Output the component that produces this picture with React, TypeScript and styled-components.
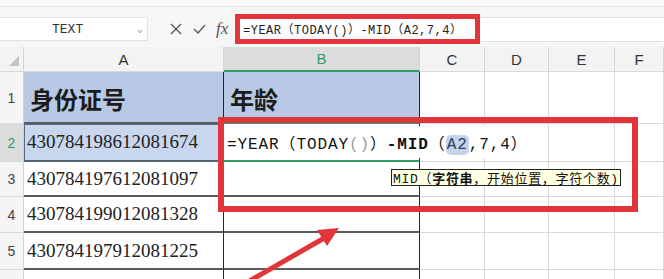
import React from 'react';
import styled, {createGlobalStyle} from 'styled-components';

const GlobalStyle = createGlobalStyle`
  html, body {
    margin: 0;
    padding: 0;
    background: #ffffff;
    overflow: hidden;
  }
  body {
    font-family: "Liberation Sans", "Noto Sans CJK SC", sans-serif;
  }
`

const RED = '#e1353b'
const GREEN = '#2e9d65'
const CJK = '"Noto Sans CJK SC", sans-serif'

const Page = styled.div`
  width: 664px;
  height: 279px;
  overflow: hidden;
  display: flex;
  flex-direction: column;
`

const TopStrip = styled.div`
  flex-shrink: 0;
  height: 6px;
  background: #fbfbfb;
  border-bottom: 1px solid #e4e4e4;
`

const FormulaBar = styled.div`
  flex-shrink: 0;
  height: 40px;
  box-sizing: border-box;
  padding-top: 4px;
  display: flex;
  align-items: center;
  background: #f6f6f6;
`

const NameBox = styled.div`
  width: 148px;
  height: 24px;
  box-sizing: border-box;
  background: #ffffff;
  border: 1px solid #e2e2e2;
  border-left: none;
  display: flex;
  align-items: center;
  justify-content: space-between;
  padding: 0 4px 0 52px;
  font-family: "Liberation Mono", monospace;
  font-size: 13px;
  color: #333;
`

const Caret = styled.span`
  font-size: 10px;
  color: #777;
`

const BarIcons = styled.div`
  width: 87px;
  display: flex;
  align-items: center;
  gap: 9px;
  padding-left: 21px;
  box-sizing: border-box;
  color: #555;
`

const Fx = styled.span`
  font-family: "Liberation Serif", serif;
  font-style: italic;
  font-size: 17px;
  color: #555;
`

const FormulaField = styled.div`
  flex: 1;
  height: 23px;
  background: #ffffff;
  border-top: 1px solid #e0e0e0;
  border-bottom: 1px solid #e0e0e0;
  display: flex;
  align-items: center;
`

const FormulaBox = styled.div`
  width: 245px;
  height: 30px;
  box-sizing: border-box;
  border: 5px solid ${RED};
  display: flex;
  align-items: center;
  padding-left: 3px;
  font-family: "Liberation Mono", ${CJK};
  font-size: 12px;
  letter-spacing: 0.5px;
  color: #222;
  white-space: nowrap;
`

const SheetWrap = styled.div`
  position: relative;
  flex: 1;
  min-height: 0;
  overflow: hidden;
`

const Sheet = styled.div`
  display: grid;
  grid-template-columns: 24px 200px 196px 65px 64px 66px 1fr;
  grid-template-rows: 25px 52px 38px 35px 36px 37px 36px;
`

type CellKind = 'corner' | 'colhead' | 'rowhead' | 'title' | 'picked' | 'editing' | 'table' | 'plain'

const fills: Record<CellKind, string> = {
  corner: '#f3f3f3',
  colhead: '#f3f3f3',
  rowhead: '#f5f5f5',
  title: '#b7c9e5',
  picked: '#c8d6ee',
  editing: '#ffffff',
  table: '#ffffff',
  plain: '#ffffff',
}

const darkRight: CellKind[] = ['title', 'picked', 'editing', 'table']

const Cell = styled.div<{ $kind: CellKind; $active?: boolean }>`
  box-sizing: border-box;
  display: flex;
  align-items: center;
  white-space: nowrap;
  background: ${p => p.$active ? '#dcdcdc' : fills[p.$kind]};
  border-right: 1px solid ${p =>
    darkRight.includes(p.$kind) ? '#262626' : p.$kind === 'plain' ? '#dadada' : '#d4d4d4'};
  border-bottom: ${p =>
    p.$kind === 'title' || p.$kind === 'table' || p.$kind === 'picked'
      ? '2px solid #5c5c5c'
      : p.$kind === 'editing' ? `2px solid ${GREEN}`
      : p.$kind === 'colhead' && p.$active ? `2px solid ${GREEN}`
      : '1px solid #dadada'};
  ${p => p.$kind === 'editing'
    ? `border-top: 2px solid ${GREEN}; margin-top: -2px; position: relative; z-index: 2;`
    : ''}
  ${p => p.$kind === 'picked' ? 'outline: 1px solid #4f6b8f; outline-offset: -1px;' : ''}
`

const ColLetter = styled.span<{ $active?: boolean }>`
  width: 100%;
  text-align: center;
  font-size: 15px;
  color: ${p => p.$active ? GREEN : '#333'};
`

const RowNum = styled.span<{ $active?: boolean }>`
  width: 100%;
  text-align: center;
  font-size: 14px;
  color: ${p => p.$active ? GREEN : '#444'};
`

const CornerMark = styled.span`
  width: 0;
  height: 0;
  margin-left: 9px;
  margin-top: 4px;
  border-left: 10px solid transparent;
  border-bottom: 10px solid #c4c4c4;
`

const Title = styled.span`
  padding-left: 6px;
  padding-top: 2px;
  font-family: ${CJK};
  font-weight: 700;
  font-size: 24px;
  color: #1c1c1c;
`

const IdNumber = styled.span`
  padding-left: 3px;
  font-family: "Liberation Serif", serif;
  font-size: 19px;
  color: #222;
`

const Formula = styled.span`
  padding: 4px 8px 4px 3px;
  background: #ffffff;
  font-family: "Liberation Mono", ${CJK};
  font-size: 16px;
  letter-spacing: 0.9px;
  color: #111;
`

const Muted = styled.span`
  color: #9a9aa8;
`

const Bold = styled.b`
  font-weight: 700;
`

const RefChip = styled.span`
  background: #c5d4ea;
  border-radius: 5px;
  padding: 1px 1px;
  color: #2a3f66;
`

const RedFrame = styled.div`
  position: absolute;
  z-index: 3;
  left: 218px;
  top: 70px;
  width: 420px;
  height: 95px;
  box-sizing: border-box;
  border: 6px solid ${RED};
  pointer-events: none;
`

const Tip = styled.div`
  position: absolute;
  z-index: 4;
  left: 391px;
  top: 122px;
  height: 17px;
  box-sizing: border-box;
  padding: 0 1px;
  background: #ffffe3;
  border: 1px solid #222;
  display: flex;
  align-items: center;
  font-family: "Liberation Mono", ${CJK};
  font-size: 13px;
  letter-spacing: 0.7px;
  color: #111;
  white-space: nowrap;
`

const Arrow = styled.svg`
  position: absolute;
  z-index: 3;
  left: 0;
  top: 0;
  pointer-events: none;
`

const columns = ['A', 'B', 'C', 'D', 'E', 'F']

// row 6 only peeks in at the bottom edge, its number is below the frame
const ids = ['430784198612081674', '430784197612081097', '430784199012081328', '430784197912081225', '']

const Blanks = () => (
  <>
    {[0, 1, 2, 3].map(i => <Cell key={i} $kind="plain"/>)}
  </>
)

export default function App() {
  return (
    <>
      <GlobalStyle/>
      <Page>
        <TopStrip/>
        <FormulaBar>
          <NameBox>
            <span>TEXT</span>
            <Caret>⌄</Caret>
          </NameBox>
          <BarIcons>
            <svg width="14" height="14" viewBox="0 0 14 14">
              <path d="M2 2 L12 12 M12 2 L2 12" stroke="#555" strokeWidth="1.3" fill="none"/>
            </svg>
            <svg width="15" height="14" viewBox="0 0 15 14">
              <path d="M2 7 L6 11 L13 3" stroke="#555" strokeWidth="1.3" fill="none"/>
            </svg>
            <Fx>fx</Fx>
          </BarIcons>
          <FormulaField>
            <FormulaBox>=YEAR（TODAY()）-MID（A2,7,4）</FormulaBox>
          </FormulaField>
        </FormulaBar>

        <SheetWrap>
          <Sheet>
            <Cell $kind="corner"><CornerMark/></Cell>
            {columns.map(c => (
              <Cell key={c} $kind="colhead" $active={c === 'B'}>
                <ColLetter $active={c === 'B'}>{c}</ColLetter>
              </Cell>
            ))}

            <Cell $kind="rowhead"><RowNum>1</RowNum></Cell>
            <Cell $kind="title"><Title>身份证号</Title></Cell>
            <Cell $kind="title"><Title>年龄</Title></Cell>
            <Blanks/>

            <Cell $kind="rowhead" $active><RowNum $active>2</RowNum></Cell>
            <Cell $kind="picked"><IdNumber>{ids[0]}</IdNumber></Cell>
            <Cell $kind="editing">
              <Formula>
                =YEAR（TODAY<Muted>()</Muted>）<Bold>-MID</Bold>（<RefChip>A2</RefChip>,7,4）
              </Formula>
            </Cell>
            <Blanks/>

            {ids.slice(1).map((id, i) => (
              <React.Fragment key={i}>
                <Cell $kind="rowhead">{id && <RowNum>{i + 3}</RowNum>}</Cell>
                <Cell $kind="table"><IdNumber>{id}</IdNumber></Cell>
                <Cell $kind="table"/>
                <Blanks/>
              </React.Fragment>
            ))}
          </Sheet>

          <RedFrame/>
          <Tip>MID（<Bold>字符串</Bold>，开始位置，字符个数)</Tip>

          <Arrow width="664" height="232" viewBox="0 0 664 232">
            <path d="M246 236 L326 190" stroke={RED} strokeWidth="5" strokeLinecap="round" fill="none"/>
            <polygon points="339,181 317,183 327,199" fill={RED}/>
          </Arrow>
        </SheetWrap>
      </Page>
    </>
  );
}
